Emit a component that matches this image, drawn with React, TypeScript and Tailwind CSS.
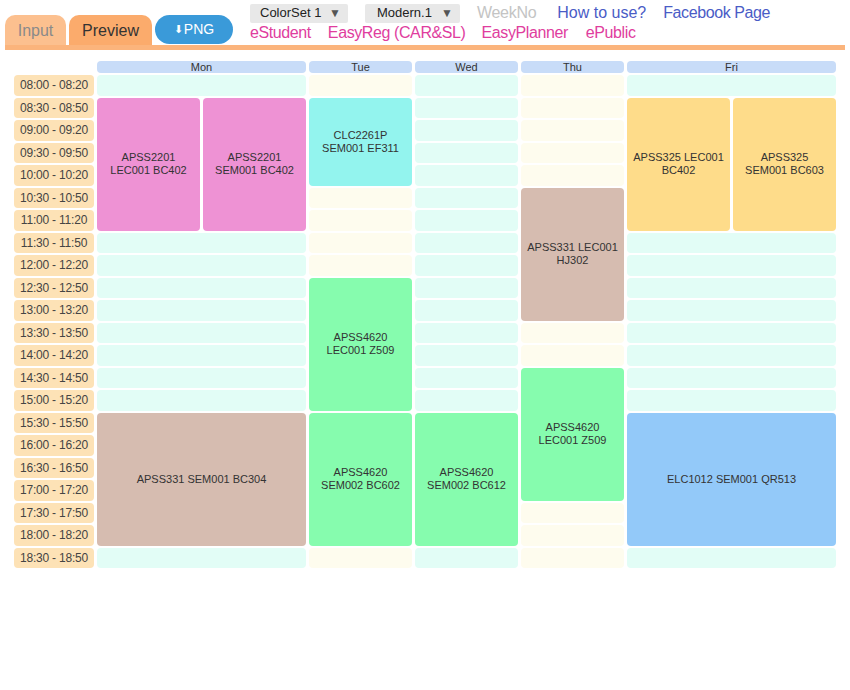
import React from "react";

type Ev = { text: string; row: number; span: number; col: number; cols: number; color: string };

const times: string[] = [];
for (let i = 0; i < 22; i++) {
    const h = 8 + Math.floor(i / 2);
    const m = i % 2 === 0 ? "00" : "30";
    const m2 = i % 2 === 0 ? "20" : "50";
    const hh = String(h).padStart(2, "0");
    times.push(`${hh}:${m} - ${hh}:${m2}`);
}

// day -> grid columns (col 1 is the time column)
const days = [
    { name: "Mon", col: 2, cols: 2, empty: "bg-[#e2fdf6]" },
    { name: "Tue", col: 4, cols: 1, empty: "bg-[#fefcee]" },
    { name: "Wed", col: 5, cols: 1, empty: "bg-[#e2fdf6]" },
    { name: "Thu", col: 6, cols: 1, empty: "bg-[#fefcee]" },
    { name: "Fri", col: 7, cols: 2, empty: "bg-[#e2fdf6]" },
];

const events: Ev[] = [
    { text: "APSS2201 LEC001 BC402", row: 1, span: 6, col: 2, cols: 1, color: "bg-[#ee92d4]" },
    { text: "APSS2201 SEM001 BC402", row: 1, span: 6, col: 3, cols: 1, color: "bg-[#ee92d4]" },
    { text: "APSS331 SEM001 BC304", row: 15, span: 6, col: 2, cols: 2, color: "bg-[#d6bcb0]" },
    { text: "CLC2261P SEM001 EF311", row: 1, span: 4, col: 4, cols: 1, color: "bg-[#93f4ee]" },
    { text: "APSS4620 LEC001 Z509", row: 9, span: 6, col: 4, cols: 1, color: "bg-[#86fcae]" },
    { text: "APSS4620 SEM002 BC602", row: 15, span: 6, col: 4, cols: 1, color: "bg-[#86fcae]" },
    { text: "APSS4620 SEM002 BC612", row: 15, span: 6, col: 5, cols: 1, color: "bg-[#86fcae]" },
    { text: "APSS331 LEC001 HJ302", row: 5, span: 6, col: 6, cols: 1, color: "bg-[#d6bcb0]" },
    { text: "APSS4620 LEC001 Z509", row: 13, span: 6, col: 6, cols: 1, color: "bg-[#86fcae]" },
    { text: "APSS325 LEC001 BC402", row: 1, span: 6, col: 7, cols: 1, color: "bg-[#fedc8a]" },
    { text: "APSS325 SEM001 BC603", row: 1, span: 6, col: 8, cols: 1, color: "bg-[#fedc8a]" },
    { text: "ELC1012 SEM001 QR513", row: 15, span: 6, col: 7, cols: 2, color: "bg-[#93c9f9]" },
];

function covered(day: { col: number; cols: number }, row: number) {
    return events.some(
        (e) => e.col >= day.col && e.col < day.col + day.cols && row >= e.row && row < e.row + e.span
    );
}

function TopBar() {
    return (
        <div className="relative h-[50px]">
            <div className="absolute left-[5px] right-[5px] top-[45px] h-[5px] bg-[#fbb47c]" />
            <div className="flex items-end pl-[5px] h-[46px]">
                <div className="w-[61px] h-[31px] rounded-t-[10px] bg-[#fcc08f] text-[#8a8a8a] text-[16px] flex items-center justify-center">
                    Input
                </div>
                <div className="ml-[3px] w-[83px] h-[31px] rounded-t-[10px] bg-[#fbab6c] text-[#333] text-[16px] flex items-center justify-center">
                    Preview
                </div>
                <div className="ml-[3px] mb-[2px] w-[78px] h-[29px] rounded-full bg-[#3a9ad9] text-white text-[14px] flex items-center justify-center">
                    <span className="text-[11px] mr-[1px]">⬇</span>PNG
                </div>
            </div>
            <div className="absolute left-[250px] top-[3px] text-[16px] leading-[20px] whitespace-nowrap">
                <div className="flex items-center">
                    <div className="w-[98px] h-[19px] bg-[#e8e8e8] rounded-[2px] text-[13px] text-[#222] flex items-center justify-between pl-[10px] pr-[7px]">
                        <span>ColorSet 1</span>
                        <span className="text-[12px] text-[#555]">▼</span>
                    </div>
                    <div className="ml-[17px] w-[95px] h-[19px] bg-[#e8e8e8] rounded-[2px] text-[13px] text-[#222] flex items-center justify-between pl-[12px] pr-[7px]">
                        <span>Modern.1</span>
                        <span className="text-[12px] text-[#555]">▼</span>
                    </div>
                    <span className="ml-[17px] text-[#c4c4c4] tracking-[-0.3px]">WeekNo</span>
                    <span className="ml-[21px] text-[#4a5cc6]">How to use?</span>
                    <span className="ml-[17px] text-[#4a5cc6] tracking-[-0.4px]">Facebook Page</span>
                </div>
                <div className="flex items-center text-[#e03d9e] tracking-[-0.4px]">
                    <span>eStudent</span>
                    <span className="ml-[17px]">EasyReg (CAR&amp;SL)</span>
                    <span className="ml-[16px]">EasyPlanner</span>
                    <span className="ml-[18px]">ePublic</span>
                </div>
            </div>
        </div>
    );
}

export default function App() {
    const cells: React.ReactNode[] = [];

    days.forEach((d) => {
        cells.push(
            <div
                key={`h-${d.name}`}
                className="bg-[#c8dcf8] rounded-[4px] text-[11px] leading-[12px] text-[#333] text-center"
                style={{ gridRow: 1, gridColumn: `${d.col} / span ${d.cols}` }}
            >
                {d.name}
            </div>
        );
    });

    times.forEach((t, i) => {
        cells.push(
            <div
                key={`t-${i}`}
                className="bg-[#fde2b6] rounded-[4px] text-[12px] text-[#444] tracking-[-0.2px] flex items-center justify-center"
                style={{ gridRow: i + 2, gridColumn: 1 }}
            >
                {t}
            </div>
        );
        days.forEach((d) => {
            if (!covered(d, i)) {
                cells.push(
                    <div
                        key={`e-${d.name}-${i}`}
                        className={`${d.empty} rounded-[4px]`}
                        style={{ gridRow: i + 2, gridColumn: `${d.col} / span ${d.cols}` }}
                    />
                );
            }
        });
    });

    events.forEach((e, i) => {
        cells.push(
            <div
                key={`ev-${i}`}
                className={`${e.color} rounded-[4px] px-[6px] flex items-center justify-center text-center text-[11px] leading-[13px] text-[#333]`}
                style={{ gridRow: `${e.row + 2} / span ${e.span}`, gridColumn: `${e.col} / span ${e.cols}` }}
            >
                {e.text}
            </div>
        );
    });

    return (
        <div className="w-[850px] h-[690px] bg-white font-['Liberation_Sans',Arial,sans-serif]">
            <TopBar />
            <div className="pl-[14px] pt-[11px]">
                <div className="grid grid-cols-[80px_repeat(7,103px)] grid-rows-[12px_repeat(22,20.5px)] gap-x-[3px] gap-y-[2px]">
                    {cells}
                </div>
            </div>
        </div>
    );
}
